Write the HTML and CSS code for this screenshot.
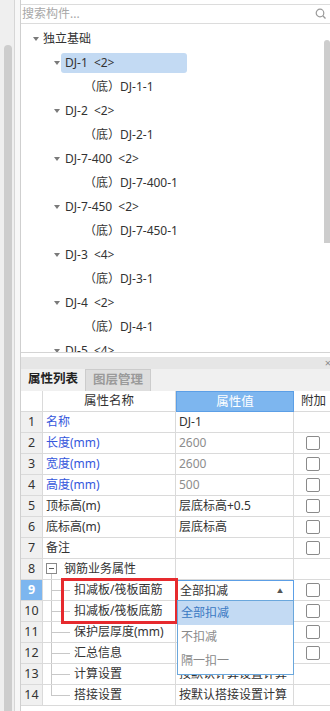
FILE: index.html
```html
<!DOCTYPE html>
<html lang="zh">
<head>
<meta charset="utf-8">
<link rel="stylesheet" href="styles.css">
</head>
<body>
<div class="app">
  <div class="strip">
    <div class="strip-track"><div class="thumb"></div></div>
    <div class="strip-edge"></div>
  </div>
  <div class="main">
    <div class="search">
      <span class="ph">搜索构件...</span>
      <svg class="sicon" width="12" height="12" viewBox="0 0 12 12"><circle cx="5" cy="5" r="3.8" fill="none" stroke="#9a9a9a" stroke-width="1.2"/><line x1="7.8" y1="7.8" x2="10.5" y2="10.5" stroke="#9a9a9a" stroke-width="1.3"/></svg>
    </div>
    <div class="tree">
      <div class="node l0"><i class="tri"></i><span>独立基础</span></div>
      <div class="node l1"><i class="tri"></i><span class="sel">DJ-1 &lt;2&gt;</span></div>
      <div class="node l2"><span>（底）DJ-1-1</span></div>
      <div class="node l1"><i class="tri"></i><span class="lbl">DJ-2 &lt;2&gt;</span></div>
      <div class="node l2"><span>（底）DJ-2-1</span></div>
      <div class="node l1"><i class="tri"></i><span class="lbl">DJ-7-400 &lt;2&gt;</span></div>
      <div class="node l2"><span>（底）DJ-7-400-1</span></div>
      <div class="node l1"><i class="tri"></i><span class="lbl">DJ-7-450 &lt;2&gt;</span></div>
      <div class="node l2"><span>（底）DJ-7-450-1</span></div>
      <div class="node l1"><i class="tri"></i><span class="lbl">DJ-3 &lt;4&gt;</span></div>
      <div class="node l2"><span>（底）DJ-3-1</span></div>
      <div class="node l1"><i class="tri"></i><span class="lbl">DJ-4 &lt;2&gt;</span></div>
      <div class="node l2"><span>（底）DJ-4-1</span></div>
      <div class="node l1"><i class="tri"></i><span class="lbl">DJ-5 &lt;4&gt;</span></div>
      <div class="node l2"><span>（底）DJ-5-1</span></div>
      <div class="vscroll"></div>
    </div>
    <div class="gap"></div>
    <div class="dock"><span class="close">×</span></div>
    <div class="tabs">
      <div class="tab active">属性列表</div>
      <div class="tab">图层管理</div>
    </div>
    <div class="props">
      <div class="row hdr"><div class="num"></div><div class="name">属性名称</div><div class="val">属性值</div><div class="add">附加</div></div>
      <div class="row"><div class="num">1</div><div class="name blue">名称</div><div class="val">DJ-1</div><div class="add"></div></div>
      <div class="row"><div class="num">2</div><div class="name blue">长度(mm)</div><div class="val gray">2600</div><div class="add"><i class="cb"></i></div></div>
      <div class="row"><div class="num">3</div><div class="name blue">宽度(mm)</div><div class="val gray">2600</div><div class="add"><i class="cb"></i></div></div>
      <div class="row"><div class="num">4</div><div class="name blue">高度(mm)</div><div class="val gray">500</div><div class="add"><i class="cb"></i></div></div>
      <div class="row"><div class="num">5</div><div class="name">顶标高(m)</div><div class="val">层底标高+0.5</div><div class="add"><i class="cb"></i></div></div>
      <div class="row"><div class="num">6</div><div class="name">底标高(m)</div><div class="val">层底标高</div><div class="add"><i class="cb"></i></div></div>
      <div class="row"><div class="num">7</div><div class="name">备注</div><div class="val"></div><div class="add"><i class="cb"></i></div></div>
      <div class="row"><div class="num">8</div><div class="name group"><i class="minus"></i>钢筋业务属性</div><div class="val"></div><div class="add"></div></div>
      <div class="row"><div class="num active">9</div><div class="name child">扣减板/筏板面筋</div><div class="val dd"><span>全部扣减</span><span class="arrow">▲</span></div><div class="add"><i class="cb"></i></div></div>
      <div class="row"><div class="num">10</div><div class="name child">扣减板/筏板底筋</div><div class="val"></div><div class="add"><i class="cb"></i></div></div>
      <div class="row"><div class="num">11</div><div class="name child">保护层厚度(mm)</div><div class="val"></div><div class="add"><i class="cb"></i></div></div>
      <div class="row"><div class="num">12</div><div class="name child">汇总信息</div><div class="val"></div><div class="add"><i class="cb"></i></div></div>
      <div class="row"><div class="num">13</div><div class="name child">计算设置</div><div class="val">按默认计算设置计算</div><div class="add"></div></div>
      <div class="row"><div class="num">14</div><div class="name child last">搭接设置</div><div class="val">按默认搭接设置计算</div><div class="add"></div></div>
      <div class="redbox"></div>
      <div class="ddlist">
        <div class="opt on">全部扣减</div>
        <div class="opt">不扣减</div>
        <div class="opt">隔一扣一</div>
      </div>
    </div>
  </div>
</div>
</body>
</html>
```
FILE: styles.css
```css
* { box-sizing: border-box; }
html, body { margin: 0; padding: 0; background: #fff; overflow: hidden; }
body {
  font-family: "Noto Sans", "Noto Sans CJK SC", sans-serif;
  font-size: 12px;
  color: #333;
}
.app { display: flex; width: 330px; height: 711px; }

.strip { width: 20px; flex: none; display: flex; background: #efefef; }
.strip-track { width: 14px; padding: 45px 2px 0 4px; display: flex; }
.thumb { flex: 1; background: #cdcdcd; border-radius: 4px 4px 0 0; }
.strip-edge { width: 6px; background: #f7f7f7; border-left: 1px solid #d6d6d6; }

.main {
  flex: 1; min-width: 0; overflow: hidden;
  border-left: 1px solid #cfcfcf;
  display: flex; flex-direction: column;
}

.search {
  margin-top: 4px; height: 20px; flex: none;
  border-top: 1px solid #dcdcdc; border-bottom: 1px solid #dcdcdc;
  display: flex; align-items: center; justify-content: space-between;
  padding: 0 3px 0 1px;
}
.ph { color: #a8a8a8; font-size: 12px; line-height: 18px; }
.sicon { display: block; }

.tree {
  position: relative; height: 329px; flex: none; overflow: hidden;
  padding-top: 3px; border-bottom: 1px solid #d4d4d4;
}
.node { height: 24px; display: flex; align-items: center; white-space: nowrap; line-height: 20px; }
.node.l0 { padding-left: 12px; }
.node.l1 { padding-left: 33px; }
.node.l2 { padding-left: 63px; }
.tri {
  width: 0; height: 0; flex: none;
  border-left: 3px solid transparent; border-right: 3px solid transparent;
  border-top: 4px solid #7a7a7a;
  margin-right: 4px;
}
.l1 .tri { margin-right: 1px; }
.lbl { padding-left: 4px; word-spacing: 3px; }
.sel {
  display: block; width: 126px; height: 20px; padding-left: 4px; word-spacing: 3px;
  background: #c3daf3; border-radius: 3px;
}
.vscroll {
  position: absolute; right: 0; top: 16px; width: 6px; height: 203px;
  background: #cdcdcd; border-radius: 3px 3px 0 0;
}

.gap { height: 4px; flex: none; }
.dock {
  height: 12px; flex: none; background: #e6e6e6;
  display: flex; justify-content: flex-end; align-items: center; padding-right: 0;
}
.close { color: #8c8c8c; font-size: 11px; line-height: 12px; margin-right: -1px; }

.tabs { height: 22px; flex: none; background: #f0f0f0; display: flex; }
.tab {
  height: 22px; line-height: 20px; text-align: center; font-size: 12.5px; white-space: nowrap;
}
.tab.active { width: 64px; color: #222; font-weight: bold; }
.tab:not(.active) {
  width: 66px; background: #dedede; color: #9a9a9a; font-weight: bold;
  border: 1px solid #cccccc; border-bottom: none;
}

.props { position: relative; flex: none; }
.row { display: grid; grid-template-columns: 22px 133px 118px 40px; height: 21px; }
.row > div {
  border-right: 1px solid #dadada; border-bottom: 1px solid #dadada;
  line-height: 20px; padding-left: 3px; white-space: nowrap; overflow: hidden;
}
.row > .num { background: #f0f0f0; text-align: center; padding-left: 0; font-size: 12.5px; color: #333; }
.row > .num.active { background: #7db6ef; color: #fff; font-weight: bold; }
.hdr > .num { background: #fff; }
.hdr > .name { text-align: center; padding-left: 0; font-size: 12.5px; }
.hdr > .val {
  background: #7db6ef; color: #fff; text-align: center; padding-left: 0;
  border: 1px solid #5c9fe6; font-size: 12.5px;
}
.hdr > .add { text-align: center; padding-left: 0; font-size: 12.5px; }
.row > .add { padding-left: 0; }
.blue { color: #3557dc; }
.gray { color: #8d8d8d; }
.cb {
  display: block; width: 14px; height: 14px; margin: 3px 0 0 12px;
  border: 1px solid #8a8a8a; border-radius: 2px; background: #fff;
}

.row > .group { position: relative; padding-left: 21px; }
.minus {
  position: absolute; left: 3px; top: 4px; width: 11px; height: 11px;
  border: 1px solid #8a8a8a; background: #fff;
}
.minus::after {
  content: ""; position: absolute; left: 2px; right: 2px; top: 4px; border-top: 1px solid #555;
}
.group::after {
  content: ""; position: absolute; left: 8px; top: 15px; bottom: -1px; border-left: 1px solid #c8c8c8;
}
.row > .child { position: relative; padding-left: 31px; }
.child::before {
  content: ""; position: absolute; left: 8px; top: 0; bottom: -1px; border-left: 1px solid #c8c8c8;
}
.child.last::before { bottom: 10px; }
.child::after {
  content: ""; position: absolute; left: 8px; width: 19px; top: 10px; border-top: 1px solid #c8c8c8;
}

.row > .dd {
  border: 1px solid #5c9fe6;
  display: flex; justify-content: space-between; align-items: center; padding-right: 10px;
}
.arrow { font-size: 6px; color: #555; line-height: 6px; }

.redbox {
  position: absolute; left: 40px; top: 187px; width: 117px; height: 46px;
  border: 3px solid #e62a2e;
}
.ddlist {
  position: absolute; left: 156px; top: 209px; width: 117px; height: 75px;
  border: 1px solid #6aa7dc; background: #fff;
}
.opt { height: 24px; line-height: 24px; padding-left: 3px; color: #8a8a8a; }
.opt.on { background: #c3daf3; color: #3a78c2; }
```
